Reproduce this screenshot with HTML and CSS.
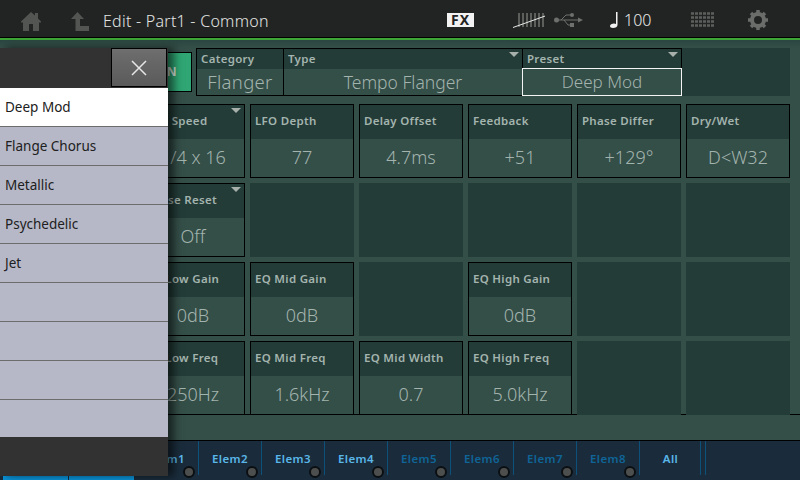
FILE: index.html
```html
<!DOCTYPE html>
<html lang="en">
<head>
    <meta charset="UTF-8">
    <title>Edit - Part1 - Common</title>
    <link rel="stylesheet" href="styles.css">
</head>
<body>
    <div class="app">
        <header class="topbar">
            <svg class="home" width="20" height="19" viewBox="0 0 20 19"><path fill="currentColor" d="M10 0 L14 3.500 V1 H17 V6.500 L20 9.500 V10.500 H18 V19 H12 V12 H8 V19 H2 V10.500 H0 V9.500 Z"/></svg>
            <svg class="back" width="18" height="19" viewBox="0 0 18 19"><path fill="currentColor" d="M6.500 0 L13 7 H9 V14 H18 V19 H4.500 V7 H0 Z"/></svg>
            <div class="title">Edit - Part1 - Common</div>
            <div class="fx">FX</div>
            <svg class="keys" width="32" height="16" viewBox="0 0 32 16">
                <path stroke="#5c5f5c" stroke-width="2" d="M6 1V15M10 1V15M14 1V15M18 1V15M22 1V15M26 1V15M30 1V15"/>
                <path stroke="#e8e8e8" stroke-width="1" d="M0 15.500 L35 3"/>
            </svg>
            <svg class="usb" width="29" height="14" viewBox="0 0 29 14">
                <circle cx="2.500" cy="7" r="2.500" fill="#6d706d"/>
                <path fill="none" stroke="#6d706d" d="M2 7H27M7 7 L12 2H17M10 7 L14 12H17"/>
                <path fill="#6d706d" d="M24 4.500 L29 7 L24 9.500Z"/>
                <circle cx="18" cy="2" r="2" fill="#6d706d"/>
                <rect x="16" y="10" width="4" height="4" fill="#6d706d"/>
            </svg>
            <svg class="note" width="8" height="16" viewBox="0 0 8 16"><path fill="#f2f2f2" d="M6 0H7.500V13C7.500 15 5.500 16 3 16C1 16 0 15 0 14C0 12.500 2 11.500 4 11.500C5 11.500 5.500 11.700 6 12Z"/></svg>
            <div class="tempo">100</div>
            <svg class="grid-icon" width="24" height="16" viewBox="0 0 24 16">
                <path stroke="#5c5f5c" stroke-width="2.500" stroke-dasharray="3 1" d="M0 1.500H24M0 5.500H24M0 9.500H24M0 13.500H24"/>
            </svg>
            <svg class="gear" width="20" height="20" viewBox="0 0 20 20">
                <circle cx="10" cy="10" r="6" fill="none" stroke="#6a6d6a" stroke-width="4"/>
                <path stroke="#6a6d6a" stroke-width="3.500" d="M10 0V20M0 10H20M3 3L17 17M17 3L3 17" stroke-dasharray="3 14"/>
            </svg>
        </header>
        <div class="greenline"></div>

        <main class="main">
            <div class="toprow">
                <div class="onbtn">ON</div>
                <div class="field category">
                    <div class="label">Category</div>
                    <div class="value">Flanger</div>
                </div>
                <div class="field type arrow">
                    <div class="label">Type</div>
                    <div class="value">Tempo Flanger</div>
                </div>
                <div class="field preset arrow">
                    <div class="label">Preset</div>
                    <div class="value selected">Deep Mod</div>
                </div>
                <div class="field-empty"></div>
            </div>

            <div class="params">
                <div class="cell arrow"><div class="label">LFO Speed</div><div class="value">1/4 x 16</div></div>
                <div class="cell"><div class="label">LFO Depth</div><div class="value">77</div></div>
                <div class="cell"><div class="label">Delay Offset</div><div class="value">4.7ms</div></div>
                <div class="cell"><div class="label">Feedback</div><div class="value">+51</div></div>
                <div class="cell"><div class="label">Phase Differ</div><div class="value">+129°</div></div>
                <div class="cell"><div class="label">Dry/Wet</div><div class="value">D&lt;W32</div></div>

                <div class="cell arrow"><div class="label">Phase Reset</div><div class="value">Off</div></div>
                <div class="cell empty"></div>
                <div class="cell empty"></div>
                <div class="cell empty"></div>
                <div class="cell empty"></div>
                <div class="cell empty"></div>

                <div class="cell"><div class="label">EQ Low Gain</div><div class="value">0dB</div></div>
                <div class="cell"><div class="label">EQ Mid Gain</div><div class="value">0dB</div></div>
                <div class="cell empty"></div>
                <div class="cell"><div class="label">EQ High Gain</div><div class="value">0dB</div></div>
                <div class="cell empty"></div>
                <div class="cell empty"></div>

                <div class="cell"><div class="label">EQ Low Freq</div><div class="value">250Hz</div></div>
                <div class="cell"><div class="label">EQ Mid Freq</div><div class="value">1.6kHz</div></div>
                <div class="cell"><div class="label">EQ Mid Width</div><div class="value">0.7</div></div>
                <div class="cell"><div class="label">EQ High Freq</div><div class="value">5.0kHz</div></div>
                <div class="cell empty"></div>
                <div class="cell empty"></div>
            </div>
        </main>

        <div class="band"></div>

        <nav class="tabs">
            <div class="tab"><span>Elem1</span><i class="dot"></i></div>
            <div class="tab"><span>Elem2</span><i class="dot"></i></div>
            <div class="tab"><span>Elem3</span><i class="dot"></i></div>
            <div class="tab"><span>Elem4</span><i class="dot"></i></div>
            <div class="tab off"><span>Elem5</span><i class="dot"></i></div>
            <div class="tab off"><span>Elem6</span><i class="dot"></i></div>
            <div class="tab off"><span>Elem7</span><i class="dot"></i></div>
            <div class="tab off"><span>Elem8</span><i class="dot"></i></div>
            <div class="tab all"><span>All</span></div>
        </nav>

        <div class="bluebars"><div></div><div></div></div>

        <aside class="panel">
            <div class="panel-head">
                <div class="close">
                    <svg width="18" height="18" viewBox="0 0 18 18"><path stroke="#e6e6e6" stroke-width="1.500" d="M2 2L16 16M16 2L2 16"/></svg>
                </div>
            </div>
            <ul class="list">
                <li class="current">Deep Mod</li>
                <li>Flange Chorus</li>
                <li>Metallic</li>
                <li>Psychedelic</li>
                <li>Jet</li>
                <li></li>
                <li></li>
                <li></li>
                <li></li>
            </ul>
        </aside>
    </div>
</body>
</html>
```

FILE: styles.css
```css
html, body {
    margin: 0;
    padding: 0;
}

body {
    width: 800px;
    height: 480px;
    overflow: hidden;
    font-family: "Noto Sans", sans-serif;
}

.app {
    position: relative;
    width: 800px;
    height: 480px;
    overflow: hidden;
    background-color: #344e48;
    display: flex;
    flex-direction: column;
}

/* top bar */
.topbar {
    height: 37px;
    background-color: #222423;
    border-bottom: 1px solid #000;
    display: flex;
    align-items: center;
    color: #525552;
    box-sizing: content-box;
}
.home {
    margin: 5px 0 0 21px;
}
.back {
    margin: 5px 0 0 30px;
}
.title {
    margin: 5px 0 0 14px;
    width: 344px;
    font-size: 16px;
    font-weight: 300;
    letter-spacing: 0.25px;
    color: #e4e6e4;
    white-space: nowrap;
}
.fx {
    width: 27px;
    height: 14px;
    margin-top: 3px;
    background-color: #f2f2f2;
    color: #222;
    font-size: 14px;
    font-weight: 700;
    line-height: 14px;
    text-align: center;
    letter-spacing: 1px;
}
.keys {
    margin: 3px 0 0 39px;
}
.usb {
    margin: 3px 0 0 9px;
}
.note {
    margin: 3px 0 0 27px;
}
.tempo {
    margin: 3px 0 0 6px;
    font-size: 16px;
    font-weight: 300;
    color: #e8eae8;
    width: 67px;
}
.grid-icon {
    margin-top: 3px;
}
.gear {
    margin: 3px 0 0 33px;
}
.greenline {
    height: 2px;
    background-color: #3ca535;
    box-shadow: 0 1px 0 #1f5c2a;
}

/* main */
.main {
    flex: none;
    height: 374px;
    box-sizing: border-box;
    padding: 8px 10px 0 141px;
    background: linear-gradient(#2b4640, #344e48 8px);
}
.toprow {
    display: flex;
    height: 48px;
}
.onbtn {
    width: 50px;
    height: 40px;
    margin: 4px 4px 0 1px;
    background-color: #2fa673;
    border: 1px solid #000;
    box-sizing: border-box;
    color: #d5e5dd;
    font-size: 12px;
    font-weight: 700;
    line-height: 38px;
    text-align: center;
}
.field {
    position: relative;
    display: flex;
    flex-direction: column;
    box-sizing: border-box;
    border: 1px solid #000;
    border-left: 1px solid #000;
    margin-right: -1px;
    background-color: #233c38;
}
.category {
    width: 88px;
}
.type {
    width: 240px;
}
.preset {
    width: 160px;
}
.field-empty {
    flex: 1;
    margin-left: 1px;
    background-color: #233c38;
}
.field .label, .cell .label {
    font-size: 11.5px;
    font-weight: 600;
    letter-spacing: 0.3px;
    color: #a4b4ae;
    padding-left: 4px;
    white-space: nowrap;
}
.field .label {
    height: 21px;
    line-height: 19px;
}
.field .value {
    flex: 1;
    background-color: #344e48;
    color: #a3b4ae;
    font-size: 17.500px;
    font-weight: 300;
    line-height: 26px;
    text-align: center;
}
.category .value {
    font-size: 18.500px;
    letter-spacing: 0.3px;
}
.field .value.selected {
    margin: 0 -1px -1px;
    border: 1px solid #f4f4f4;
    font-size: 17px;
}
.arrow::after {
    content: "";
    position: absolute;
    top: 3px;
    right: 3px;
    border-left: 5px solid transparent;
    border-right: 5px solid transparent;
    border-top: 5px solid #a8b0ac;
}

.params {
    display: grid;
    grid-template-columns: repeat(6, 104px);
    grid-auto-rows: 74px;
    column-gap: 5px;
    row-gap: 5px;
    margin-top: 8px;
}
.cell {
    position: relative;
    display: flex;
    flex-direction: column;
    box-sizing: border-box;
    border: 1px solid #000;
    background-color: #233c38;
}
.cell.empty {
    border: none;
}
.cell .label {
    height: 34px;
    line-height: 32px;
}
.cell .value {
    flex: 1;
    background-color: #344e48;
    color: #a3b4ae;
    font-size: 18px;
    font-weight: 300;
    line-height: 37px;
    text-align: center;
    white-space: nowrap;
}

.band {
    height: 25px;
    border-top: 1px solid #000;
    border-bottom: 1px solid #000;
    background-color: #344e48;
}

/* element tabs */
.tabs {
    flex: 1;
    display: flex;
    background-color: #1a2c3b;
    padding-left: 135px;
}
.tab {
    position: relative;
    width: 63px;
    height: 34px;
    box-sizing: border-box;
    border-left: 1px solid #0d5079;
    color: #5ab7ea;
    font-size: 11.500px;
    font-weight: 600;
    letter-spacing: 0.4px;
    line-height: 36px;
    text-align: center;
}
.tab.off {
    color: #0f6498;
}
.tab.all {
    width: 67px;
    border-right: 1px solid #0d5079;
    box-shadow: inset -4px 0 0 #1a2c3b, inset -5px 0 0 #0d5079;
    padding-right: 4px;
}
.dot {
    position: absolute;
    right: 3px;
    bottom: -3px;
    width: 8px;
    height: 8px;
    border: 2px solid #0b0f12;
    border-radius: 50%;
    background-color: #4d4f4e;
}

.bluebars {
    position: absolute;
    left: 3px;
    bottom: 0;
    display: flex;
    gap: 1px;
}
.bluebars div {
    width: 65px;
    height: 4px;
    background-color: #0a93d9;
}

/* preset popup over the left side */
.panel {
    position: absolute;
    left: 0;
    top: 48px;
    width: 168px;
    height: 428px;
    background-color: #323232;
    box-shadow: 6px 0 8px rgba(0, 0, 0, 0.55);
}
.panel-head {
    height: 40px;
    display: flex;
    justify-content: flex-end;
}
.close {
    width: 56px;
    height: 39px;
    margin-right: 1px;
    box-sizing: border-box;
    border: 1px solid #000;
    background: linear-gradient(#6e6e6e, #5a5a5a);
    display: flex;
    align-items: center;
    justify-content: center;
}
.list {
    list-style: none;
    margin: 0;
    padding: 0;
    background-color: #b6b8c8;
    height: 349px;
    overflow: hidden;
}
.list li {
    height: 39px;
    box-sizing: border-box;
    border-bottom: 1px solid #6c6c6c;
    padding-left: 5px;
    font-size: 13.500px;
    line-height: 38px;
    color: #202020;
}
.list li.current {
    background-color: #fff;
}
.list li:last-child {
    border-bottom: none;
}
```
